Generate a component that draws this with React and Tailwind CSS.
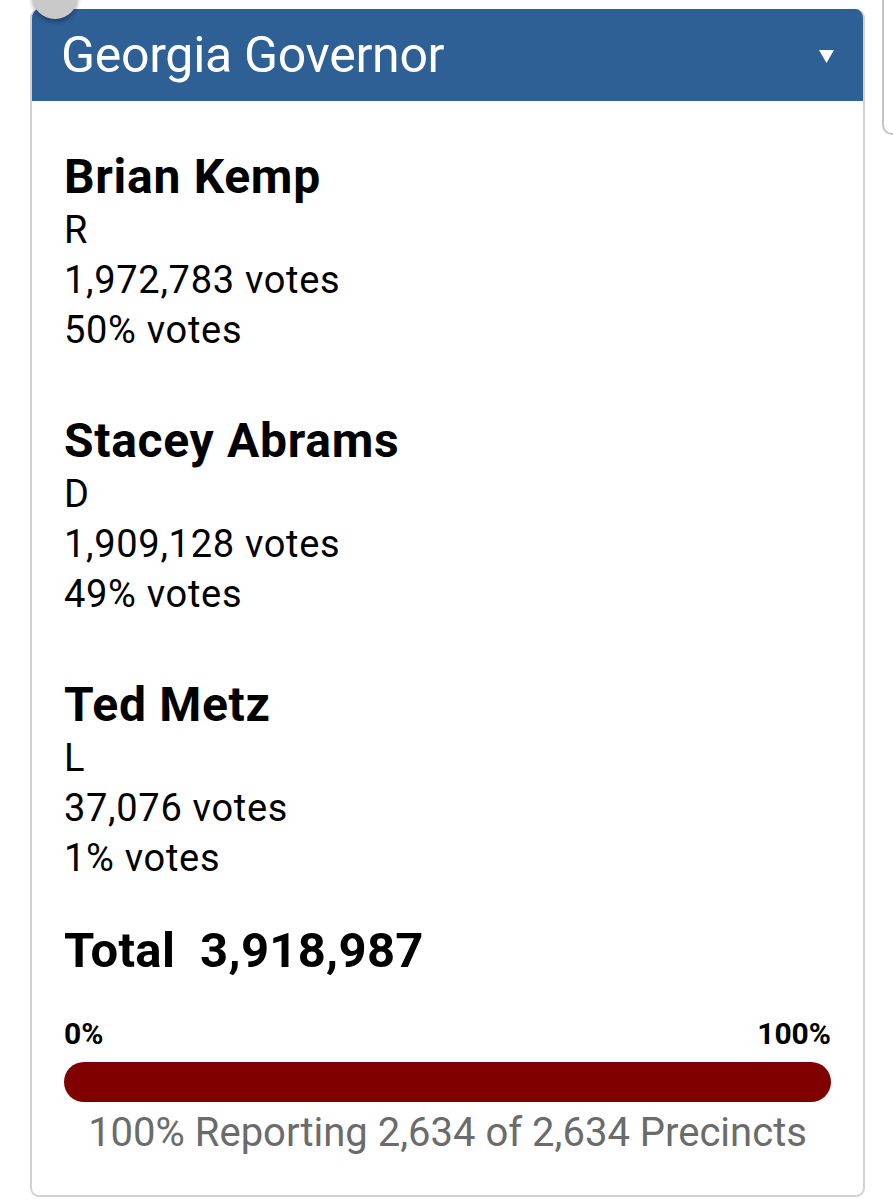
export default function App() {
  const candidates = [
    { name: 'Brian Kemp', party: 'R', votes: '1,972,783', pct: '50%' },
    { name: 'Stacey Abrams', party: 'D', votes: '1,909,128', pct: '49%' },
    { name: 'Ted Metz', party: 'L', votes: '37,076', pct: '1%' },
  ];

  return (
    <div
      className="relative w-[893px] h-[1200px] overflow-hidden bg-white text-black"
      style={{ fontFamily: 'Roboto, "Liberation Sans", sans-serif' }}
    >
      {/* floating button peeking in at the top */}
      <div className="absolute left-[32px] top-[-27px] z-10 w-[46px] h-[46px] rounded-full bg-[#c9c9c9] shadow-[0_3px_4px_rgba(0,0,0,0.3)]" />

      <div className="flex items-start gap-[17px] pt-[9px] pl-[30px]">
        {/* election card */}
        <div className="w-[835px] shrink-0 rounded-[9px] border-2 border-[#d2d2d2] border-t-0 overflow-hidden">
          <div className="flex items-center justify-between h-[92px] bg-[#2e5f95] pl-[31px] pr-[31px] -mx-[2px]">
            <h2 className="text-[50px] leading-none text-white tracking-[-0.3px]">Georgia Governor</h2>
            <svg width="15" height="13" viewBox="0 0 15 13" className="mt-[2px]">
              <path d="M0 0H15L7.5 13Z" fill="#fff" />
            </svg>
          </div>

          <div className="px-[32px] pt-[48px] pb-[40px]">
            {candidates.map((c, i) => (
              <div key={c.name} className={i > 0 ? 'mt-[58px]' : ''}>
                <div className="text-[48px] leading-[56px] font-bold tracking-[0.7px]">{c.name}</div>
                <div className="text-[38px] leading-[50px] tracking-[0.7px]">{c.party}</div>
                <div className="text-[38px] leading-[50px] tracking-[0.7px]">{c.votes} votes</div>
                <div className="text-[38px] leading-[50px] tracking-[0.7px]">{c.pct} votes</div>
              </div>
            ))}

            <div className="mt-[38px] text-[49px] leading-[60px] font-bold whitespace-pre tracking-[0.3px]">Total  3,918,987</div>

            <div className="mt-[38px] flex justify-between text-[30px] leading-[30px] font-bold">
              <span>0%</span>
              <span>100%</span>
            </div>
            <div className="mt-[13px] h-[40px] rounded-full bg-[#800000]" />
            <div className="mt-[9px] text-center text-[40px] leading-[44px] text-[#6b6b6b]">
              100% Reporting 2,634 of 2,634 Precincts
            </div>
          </div>
        </div>

        {/* next card, cut off at the right edge */}
        <div className="w-[120px] h-[135px] -mt-[9px] shrink-0 rounded-bl-[10px] border-l-2 border-b-2 border-[#c4c4c4]" />
      </div>
    </div>
  );
}
